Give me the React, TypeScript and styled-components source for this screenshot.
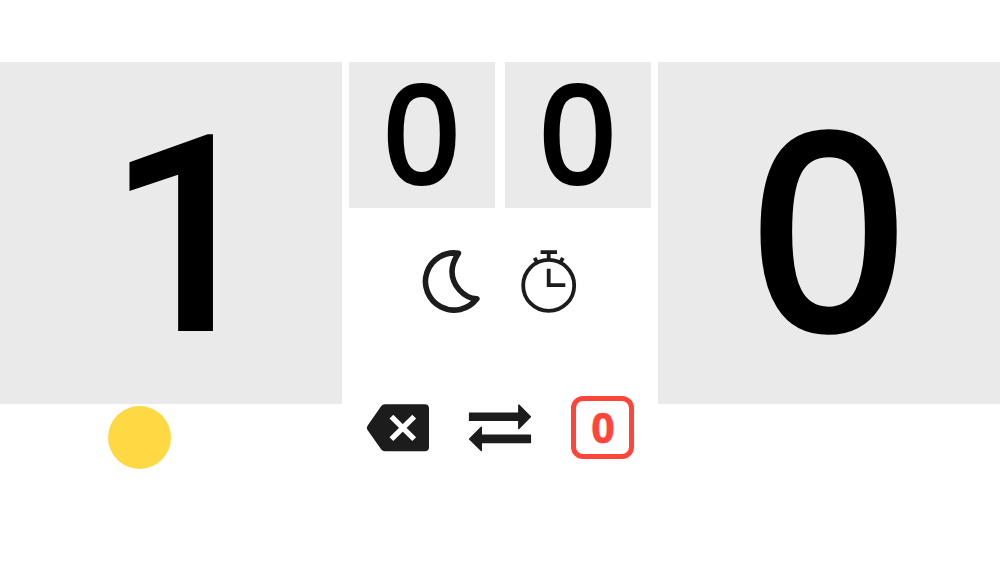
import React from "react";
import styled, { createGlobalStyle } from "styled-components";

const GlobalStyle = createGlobalStyle`
  body {
    margin: 0;
    background: #ffffff;
  }
`;

const Board = styled.main`
  display: flex;
  justify-content: space-between;
  align-items: flex-start;
  box-sizing: border-box;
  width: 1000px;
  height: 563px;
  padding-top: 62px;
  overflow: hidden;
`;

const Side = styled.section`
  width: 342px;
`;

const Tile = styled.div<{ $size: number }>`
  display: flex;
  align-items: center;
  justify-content: center;
  width: ${({ $size }) => $size}px;
  height: ${({ $size }) => $size}px;
  background: #eaeaea;
`;

const Zero = styled.span<{ $size: number }>`
  margin-bottom: ${({ $size }) => $size * 0.012}px;
  color: #000000;
  font-family: "Liberation Sans", sans-serif;
  font-size: ${({ $size }) => $size}px;
  line-height: 1;
  transform: scaleX(0.963);
  -webkit-text-stroke: ${({ $size }) => $size * 0.029}px #000000;
`;

const One = styled.span`
  margin: 8px 0 0 31px;
  color: #000000;
  font-family: Roboto, sans-serif;
  font-size: 273px;
  font-weight: 500;
  line-height: 1;
  transform: scaleX(1.02);
  -webkit-text-stroke: 2px #000000;
`;

const Serve = styled.div`
  width: 63px;
  height: 63px;
  margin: 2px 0 0 108px;
  border-radius: 50%;
  background: #ffd943;
`;

const Middle = styled.section`
  display: flex;
  flex-direction: column;
  align-items: center;
  width: 302px;
`;

const Sets = styled.div`
  display: flex;
  gap: 10px;
`;

const Tools = styled.div<{ $gap: number; $top: number }>`
  display: flex;
  gap: ${({ $gap }) => $gap}px;
  margin-top: ${({ $top }) => $top}px;
`;

const IconButton = styled.button`
  display: block;
  width: 63px;
  height: 63px;
  padding: 0;
  border: 0;
  background: none;
  color: #1c1c1c;

  svg {
    display: block;
    width: 100%;
    height: 100%;
    overflow: visible;
  }
`;

const ResetButton = styled.button`
  display: flex;
  align-items: center;
  justify-content: center;
  box-sizing: border-box;
  width: 63px;
  height: 63px;
  padding: 0 0 0 1px;
  border: 5px solid #ff443a;
  border-radius: 12px;
  background: none;
  color: #ff443a;
  font-family: "Open Sans", sans-serif;
  font-size: 41px;
  font-weight: 700;
  line-height: 1;
  -webkit-text-stroke: 0.5px #ff443a;
`;

const MoonIcon = () => (
  <svg viewBox="0 0 63 63" fill="none" stroke="currentColor" strokeWidth="5.6" strokeLinejoin="round">
    <path d="M38.4 3.2A28.6 28.6 0 1 0 56.8 48.8C43 48 32 34.5 32 21.5C32 14.5 35 8.5 38.4 3.2Z" />
  </svg>
);

const TimerIcon = () => (
  <svg viewBox="0 0 63 63" fill="none" stroke="currentColor" strokeWidth="3.8">
    <circle cx="31.7" cy="35.4" r="25.5" />
    <path d="M23.6 2.2H40M31.7 2.2V9.5" />
    <path d="M31.7 18.7V35.2H48.3" />
    <path d="M17.6 7.8L20.4 13M45.9 7.8L43.1 13" />
  </svg>
);

const BackspaceIcon = () => (
  <svg viewBox="0 0 63 63">
    <path
      fill="currentColor"
      d="M19 8.2H58.7Q63 8.2 63 12.5V51Q63 55.3 58.7 55.3H19Q16.5 55.3 15.1 53.2L1.5 34Q.1 31.8 1.5 29.7L15.1 10.3Q16.5 8.2 19 8.2Z"
    />
    <path stroke="#ffffff" strokeWidth="5.4" d="M25.4 20.6L48.2 43.2M48.2 20.6L25.4 43.2" />
  </svg>
);

const SwapIcon = () => (
  <svg viewBox="0.5 0 63 63" fill="currentColor" stroke="currentColor" strokeWidth="1.4" strokeLinejoin="round">
    <path d="M1.1 17.1H50.3V9.1L61.9 20.8L50.3 32.5V24.4H1.1Z" />
    <path d="M61.9 39.2H12.8V31.2L1.1 42.9L12.8 54.6V46.6H61.9Z" />
  </svg>
);

const App: React.FC = () => {
  return (
    <>
      <GlobalStyle />
      <Board>
        <Side>
          <Tile $size={342}>
            <One>1</One>
          </Tile>
          <Serve />
        </Side>
        <Middle>
          <Sets>
            <Tile $size={146}>
              <Zero $size={139}>0</Zero>
            </Tile>
            <Tile $size={146}>
              <Zero $size={139}>0</Zero>
            </Tile>
          </Sets>
          <Tools $gap={34} $top={42}>
            <IconButton aria-label="Dark mode">
              <MoonIcon />
            </IconButton>
            <IconButton aria-label="Timer">
              <TimerIcon />
            </IconButton>
          </Tools>
          <Tools $gap={39.5} $top={83}>
            <IconButton aria-label="Undo">
              <BackspaceIcon />
            </IconButton>
            <IconButton aria-label="Swap sides">
              <SwapIcon />
            </IconButton>
            <ResetButton>0</ResetButton>
          </Tools>
        </Middle>
        <Side>
          <Tile $size={342}>
            <Zero $size={279}>0</Zero>
          </Tile>
        </Side>
      </Board>
    </>
  );
};

export default App;
